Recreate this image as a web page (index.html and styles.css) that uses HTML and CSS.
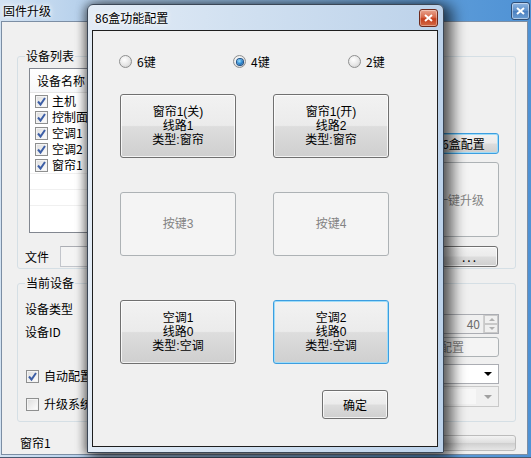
FILE: index.html
```html
<!DOCTYPE html>
<html lang="zh-CN">
<head>
<meta charset="utf-8">
<title>固件升级</title>
<link rel="stylesheet" href="styles.css">
</head>
<body>
<div class="win">
  <div class="win-title">
    <span class="win-caption">固件升级</span>
    <span class="win-close">
      <svg width="9" height="8" viewBox="0 0 9 8"><path d="M1 1 L8 7 M8 1 L1 7" stroke="#fff" stroke-width="2"/></svg>
    </span>
  </div>
  <div class="win-client">
    <fieldset class="group group-list">
      <legend>设备列表</legend>
      <div class="list-row">
        <div class="listview">
          <div class="lv-head"><span>设备名称</span></div>
          <div class="lv-item"><span class="chk on"><svg width="11" height="11" viewBox="0 0 11 11"><path d="M2 5.5 L4.5 8.5 L9 2" fill="none" stroke="#3d5fa6" stroke-width="2"/></svg></span>主机</div>
          <div class="lv-item"><span class="chk on"><svg width="11" height="11" viewBox="0 0 11 11"><path d="M2 5.5 L4.5 8.5 L9 2" fill="none" stroke="#3d5fa6" stroke-width="2"/></svg></span>控制面板</div>
          <div class="lv-item"><span class="chk on"><svg width="11" height="11" viewBox="0 0 11 11"><path d="M2 5.5 L4.5 8.5 L9 2" fill="none" stroke="#3d5fa6" stroke-width="2"/></svg></span>空调1</div>
          <div class="lv-item"><span class="chk on"><svg width="11" height="11" viewBox="0 0 11 11"><path d="M2 5.5 L4.5 8.5 L9 2" fill="none" stroke="#3d5fa6" stroke-width="2"/></svg></span>空调2</div>
          <div class="lv-item"><span class="chk on"><svg width="11" height="11" viewBox="0 0 11 11"><path d="M2 5.5 L4.5 8.5 L9 2" fill="none" stroke="#3d5fa6" stroke-width="2"/></svg></span>窗帘1</div>
          <div class="lv-item blank"></div>
          <div class="lv-item blank"></div>
          <div class="lv-item blank"></div>
        </div>
        <div class="side-col">
          <div class="btn focus cfg">86盒配置</div>
          <div class="btn off big">一键升级</div>
        </div>
      </div>
      <div class="file-row">
        <span class="file-lbl">文件</span>
        <span class="field"></span>
        <div class="btn browse">...</div>
      </div>
    </fieldset>

    <fieldset class="group group-dev">
      <legend>当前设备</legend>
      <div class="dev-cols">
        <div class="dev-left">
          <div class="dev-lbl type">设备类型</div>
          <div class="dev-lbl id">设备ID</div>
          <div class="chk-row auto"><span class="chk on"><svg width="11" height="11" viewBox="0 0 11 11"><path d="M2 5.5 L4.5 8.5 L9 2" fill="none" stroke="#3d5fa6" stroke-width="2"/></svg></span>自动配置</div>
          <div class="chk-row sys"><span class="chk"></span>升级系统</div>
        </div>
        <div class="dev-right">
          <div class="spin">
            <span class="spin-val">40</span>
            <span class="spin-btns"><span class="spin-up"></span><span class="spin-dn"></span></span>
          </div>
          <div class="btn off save">保存配置</div>
          <div class="combo"><span class="combo-arrow"></span></div>
          <div class="combo off"><span class="combo-text"></span><span class="combo-arrow"></span></div>
        </div>
      </div>
    </fieldset>

    <div class="status">
      <span class="status-text">窗帘1</span>
      <div class="progress"></div>
    </div>
  </div>
</div>

<div class="dlg">
  <div class="dlg-title">
    <span class="dlg-caption">86盒功能配置</span>
    <span class="dlg-close">
      <svg width="9" height="8" viewBox="0 0 9 8"><path d="M1 1 L8 7 M8 1 L1 7" stroke="#fff" stroke-width="2"/></svg>
    </span>
  </div>
  <div class="dlg-client">
    <div class="radio-row">
      <div class="radio-item"><span class="radio"></span>6键</div>
      <div class="radio-item"><span class="radio on"></span>4键</div>
      <div class="radio-item"><span class="radio"></span>2键</div>
    </div>
    <div class="key-row first">
      <div class="btn key">窗帘1(关)<br>线路1<br>类型:窗帘</div>
      <div class="btn key">窗帘1(开)<br>线路2<br>类型:窗帘</div>
    </div>
    <div class="key-row second">
      <div class="btn key off">按键3</div>
      <div class="btn key off">按键4</div>
    </div>
    <div class="key-row third">
      <div class="btn key">空调1<br>线路0<br>类型:空调</div>
      <div class="btn key focus">空调2<br>线路0<br>类型:空调</div>
    </div>
    <div class="btn ok">确定</div>
  </div>
</div>
</body>
</html>
```

FILE: styles.css
```css
* { box-sizing: border-box; }

html, body { margin: 0; padding: 0; }

body {
  width: 531px;
  height: 458px;
  overflow: hidden;
  position: relative;
  font-family: "Noto Sans CJK SC", "Noto Sans", sans-serif;
  font-size: 12px;
  color: #000;
  background: #5f8fc4;
}

/* ---------- main window ---------- */
.win {
  width: 531px;
  height: 458px;
  display: flex;
  flex-direction: column;
  padding: 0 3px 2px 1px;
  background: linear-gradient(to right, #d3e3f3 0%, #b9d2ec 14%, #86b4e1 60%, #5a9ad8 85%, #4f92d5 100%);
  border-bottom: 1px solid #4a5a70;
}

.win-title {
  height: 21px;
  display: flex;
  align-items: center;
  padding-left: 2px;
}

.win-caption {
  line-height: 14px;
  text-shadow: 0 0 6px #fff, 0 0 4px #fff;
}

.win-close {
  margin-left: auto;
  margin-right: -2px;
  margin-top: 1px;
  width: 19px;
  height: 18px;
  border: 1px solid #2f4d74;
  border-radius: 3px;
  background: linear-gradient(#8fb5e0, #5c8fc9 50%, #4a7fbf 51%, #6a9dd3);
  display: flex;
  align-items: center;
  justify-content: center;
  box-shadow: inset 0 0 0 1px rgba(255,255,255,0.45);
}

.win-client {
  flex: 1;
  background: #f0f0f0;
  border: 1px solid #7c8ea4;
  padding: 0 11px 0 15px;
  display: flex;
  flex-direction: column;
}

/* group boxes */
.group {
  margin: 0;
  padding: 0;
  border: 1px solid #d5dfe5;
  border-radius: 3px;
  min-width: 0;
}

.group legend {
  margin-left: 7px;
  padding: 0 1px;
  line-height: 14px;
}

.group-list {
  margin-top: 27px;
  height: 220px;
}

.list-row {
  display: flex;
  margin-top: 5px;
}

.listview {
  margin-left: 11px;
  width: 380px;
  height: 165px;
  border: 1px solid #828790;
  background: #fff;
  overflow: hidden;
}

.lv-head {
  height: 24px;
  display: flex;
  align-items: center;
  padding-left: 7px;
  background: linear-gradient(#fff, #f7f8fa);
  border-bottom: 1px solid #e5e5e5;
}

.lv-item {
  height: 16px;
  display: flex;
  align-items: center;
  padding-left: 5px;
  gap: 4px;
  line-height: 14px;
}

.lv-item.blank {
  border-top: 1px solid #f0f0f0;
}

.chk {
  width: 13px;
  height: 13px;
  flex: none;
  border: 1px solid #8e8f8f;
  background: linear-gradient(135deg, #dcdcdc, #ffffff);
  box-shadow: inset 0 0 0 1px #f4f4f4;
  display: flex;
  align-items: center;
  justify-content: center;
}

.side-col {
  margin-left: auto;
  margin-right: 16px;
  width: 78px;
  display: flex;
  flex-direction: column;
}

/* shared push button look */
.btn {
  border: 1px solid #707070;
  border-radius: 3px;
  background: linear-gradient(#f2f2f2 0%, #ebebeb 49%, #dddddd 51%, #cfcfcf 100%);
  box-shadow: inset 0 0 0 1px rgba(255,255,255,0.75);
  display: flex;
  align-items: center;
  justify-content: center;
  text-align: center;
  line-height: 14px;
}

.btn.off {
  border-color: #adb2b5;
  background: #f4f4f4;
  box-shadow: none;
  color: #838383;
}

.btn.focus {
  border-color: #3c9ee0;
  box-shadow: inset 0 0 0 1px #9fdcf8;
}

.cfg {
  margin-top: 65px;
  height: 21px;
}

.big {
  margin-top: 8px;
  height: 75px;
}

.file-row {
  display: flex;
  align-items: center;
  margin-top: 9px;
  height: 21px;
  padding-left: 7px;
}

.file-lbl {
  width: 35px;
  line-height: 14px;
}

.field {
  width: 377px;
  height: 21px;
  border: 1px solid #c2c5cb;
  border-top-color: #abadb3;
  background: #f4f4f4;
}

.browse {
  margin-left: 5px;
  width: 56px;
  height: 21px;
  letter-spacing: 2px;
}

.group-dev {
  margin-top: 7px;
  height: 146px;
}

.dev-cols {
  display: flex;
}

.dev-left {
  padding-left: 7px;
  display: flex;
  flex-direction: column;
}

.dev-lbl { line-height: 14px; }
.dev-lbl.type { margin-top: 12px; }
.dev-lbl.id { margin-top: 9px; }

.chk-row {
  display: flex;
  align-items: center;
  gap: 5px;
  line-height: 14px;
  height: 14px;
  padding-left: 1px;
}

.chk-row.auto { margin-top: 30px; }
.chk-row.sys { margin-top: 14px; }

.dev-right {
  margin-left: auto;
  margin-right: 16px;
  width: 118px;
  display: flex;
  flex-direction: column;
}

.spin {
  margin-top: 24px;
  height: 20px;
  border: 1px solid #abadb3;
  background: #f0f0f0;
  display: flex;
  align-items: center;
  justify-content: flex-end;
}

.spin-val {
  color: #6d6d6d;
  padding-right: 3px;
  line-height: 14px;
}

.spin-btns {
  width: 15px;
  height: 18px;
  display: flex;
  flex-direction: column;
  border-left: 1px solid #d0d0d0;
}

.spin-up, .spin-dn {
  flex: 1;
  background: #f0f0f0;
  border: 1px solid #c9c9c9;
  position: relative;
}

.spin-up::after, .spin-dn::after {
  content: "";
  position: absolute;
  left: 4px;
  top: 2px;
  border-left: 3px solid transparent;
  border-right: 3px solid transparent;
}

.spin-up::after { border-bottom: 3px solid #b0b0b0; }
.spin-dn::after { border-top: 3px solid #b0b0b0; }

.save {
  margin-top: 3px;
  height: 20px;
}

.combo {
  margin-top: 7px;
  height: 20px;
  border: 1px solid #abadb3;
  background: #fff;
  display: flex;
  align-items: center;
  justify-content: flex-end;
  padding-right: 6px;
}

.combo.off {
  margin-top: 2px;
  height: 21px;
  background: #f0f0f0;
  border-color: #c9c9c9;
  padding: 2px 6px 2px 2px;
}

.combo-text {
  flex: 1;
  align-self: stretch;
  background: #f7f7f7;
  margin-right: 8px;
}

.combo-arrow {
  width: 0;
  height: 0;
  border-left: 4px solid transparent;
  border-right: 4px solid transparent;
  border-top: 4px solid #000;
}

.combo.off .combo-arrow { border-top-color: #a0a0a0; }

.status {
  margin-top: 13px;
  display: flex;
  align-items: center;
  height: 16px;
  margin-left: 3px;
}

.status-text { line-height: 14px; }

.progress {
  margin-left: auto;
  width: 160px;
  height: 16px;
  border: 1px solid #bcbcbc;
  border-radius: 3px;
  background: linear-gradient(#f3f3f3, #dedede 50%, #cfcfcf 51%, #e6e6e6);
}

/* ---------- modal dialog ---------- */
.dlg {
  position: absolute;
  left: 87px;
  top: 4px;
  width: 357px;
  height: 449px;
  border: 1px solid #3b4756;
  border-radius: 6px 6px 0 0;
  background: linear-gradient(to right, #e3ecf6 0%, #d2e1f1 40%, #bcd2ea 100%);
  box-shadow: 6px 3px 14px 3px rgba(0,0,0,0.6), -3px 0 9px rgba(0,0,0,0.35);
  padding: 0 5px 5px 4px;
  display: flex;
  flex-direction: column;
}

.dlg-title {
  height: 25px;
  display: flex;
  align-items: flex-start;
  padding-left: 3px;
}

.dlg-caption {
  margin-top: 6px;
  line-height: 14px;
  text-shadow: 0 0 6px #fff, 0 0 4px #fff;
}

.dlg-close {
  margin-left: auto;
  margin-top: 4px;
  width: 19px;
  height: 18px;
  border: 1px solid #6e2a1c;
  border-radius: 3px;
  background: linear-gradient(#e9a48f, #d7694b 45%, #c43d1c 55%, #d36a45);
  box-shadow: inset 0 0 0 1px rgba(255,255,255,0.35);
  display: flex;
  align-items: center;
  justify-content: center;
}

.dlg-client {
  flex: 1;
  border: 1px solid #1e1e1e;
  background: #f0f0f0;
  display: flex;
  flex-direction: column;
  padding-top: 24px;
}

.radio-row {
  display: grid;
  grid-template-columns: 114px 115px 1fr;
  padding-left: 26px;
  height: 13px;
}

.radio-item {
  display: flex;
  align-items: center;
  gap: 5px;
  line-height: 13px;
}

.radio {
  width: 13px;
  height: 13px;
  flex: none;
  border-radius: 50%;
  border: 1px solid #8e8f8f;
  background: radial-gradient(circle at 40% 35%, #ffffff 0%, #e6e6e6 55%, #c6c6c6 100%);
  display: flex;
  align-items: center;
  justify-content: center;
}

.radio.on::after {
  content: "";
  width: 6px;
  height: 6px;
  border-radius: 50%;
  background: radial-gradient(circle at 40% 35%, #9fe0fb 0%, #2d8ad4 50%, #0f3f7c 100%);
  box-shadow: 0 0 0 1px #1b4f86;
}

.key-row {
  display: grid;
  grid-template-columns: 116px 116px;
  column-gap: 37px;
  padding-left: 27px;
}

.key-row.first { margin-top: 26px; }
.key-row.second { margin-top: 34px; }
.key-row.third { margin-top: 44px; }

.key {
  height: 64px;
  font-family: "Liberation Sans", "Noto Sans CJK SC", sans-serif;
  line-height: 14px;
}

.ok {
  margin-top: 26px;
  margin-left: 229px;
  width: 66px;
  height: 29px;
}
```
